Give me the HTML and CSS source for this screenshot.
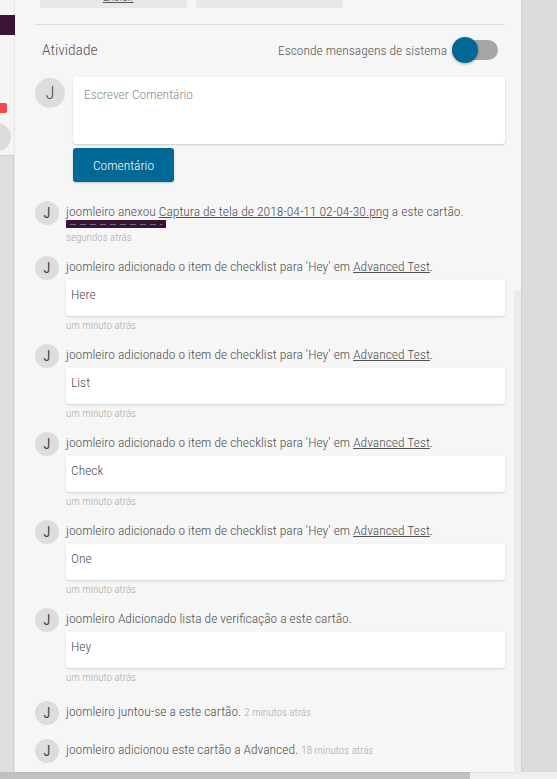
FILE: index.html
```html
<!DOCTYPE html>
<html lang="pt">
<head>
<meta charset="utf-8">
<title>Atividade</title>
<link rel="stylesheet" href="styles.css">
</head>
<body>
<div class="screen">
  <div class="board">
    <div class="strip">
      <div class="strip-thumb"></div>
      <div class="strip-badge"></div>
      <div class="strip-avatar"></div>
      <div class="strip-list"></div>
    </div>
    <div class="panel">
      <div class="tiles">
        <div class="tile"><span class="tile-text">✎ <u>Excluir</u></span></div>
        <div class="tile"></div>
      </div>
      <div class="rule"></div>
      <div class="activity-head">
        <h3 class="activity-title">Atividade</h3>
        <div class="toggle-wrap">
          <span class="toggle-label">Esconde mensagens de sistema</span>
          <span class="toggle"><span class="knob"></span></span>
        </div>
      </div>
      <div class="composer">
        <div class="avatar avatar-lg">J</div>
        <div class="composer-body">
          <div class="textarea">Escrever Comentário</div>
          <button class="btn">Comentário</button>
        </div>
      </div>
      <div class="feed">
        <div class="item">
          <div class="avatar">J</div>
          <div class="item-body">
            <div class="line">joomleiro anexou <a>Captura de tela de 2018-04-11 02-04-30.png</a> a este cartão.</div>
            <div class="thumb"><span class="thumb-dots"></span></div>
            <div class="time">segundos atrás</div>
          </div>
        </div>
        <div class="item">
          <div class="avatar">J</div>
          <div class="item-body">
            <div class="line">joomleiro adicionado o item de checklist para 'Hey' em <a>Advanced Test</a>.</div>
            <div class="card">Here</div>
            <div class="time">um minuto atrás</div>
          </div>
        </div>
        <div class="item">
          <div class="avatar">J</div>
          <div class="item-body">
            <div class="line">joomleiro adicionado o item de checklist para 'Hey' em <a>Advanced Test</a>.</div>
            <div class="card">List</div>
            <div class="time">um minuto atrás</div>
          </div>
        </div>
        <div class="item">
          <div class="avatar">J</div>
          <div class="item-body">
            <div class="line">joomleiro adicionado o item de checklist para 'Hey' em <a>Advanced Test</a>.</div>
            <div class="card">Check</div>
            <div class="time">um minuto atrás</div>
          </div>
        </div>
        <div class="item">
          <div class="avatar">J</div>
          <div class="item-body">
            <div class="line">joomleiro adicionado o item de checklist para 'Hey' em <a>Advanced Test</a>.</div>
            <div class="card">One</div>
            <div class="time">um minuto atrás</div>
          </div>
        </div>
        <div class="item item-wide">
          <div class="avatar">J</div>
          <div class="item-body">
            <div class="line">joomleiro Adicionado lista de verificação a este cartão.</div>
            <div class="card">Hey</div>
            <div class="time">um minuto atrás</div>
          </div>
        </div>
        <div class="item item-short">
          <div class="avatar">J</div>
          <div class="item-body">
            <div class="line">joomleiro juntou-se a este cartão. <span class="time-inline">2 minutos atrás</span></div>
          </div>
        </div>
        <div class="item item-short">
          <div class="avatar">J</div>
          <div class="item-body">
            <div class="line">joomleiro adicionou este cartão a Advanced. <span class="time-inline">18 minutos atrás</span></div>
          </div>
        </div>
      </div>
      <div class="vscroll"></div>
    </div>
    <div class="side"></div>
  </div>
  <div class="hscroll"><div class="hthumb"></div></div>
</div>
</body>
</html>
```
FILE: styles.css
```css
* { box-sizing: border-box; }
html, body { margin: 0; padding: 0; }
body {
  width: 557px;
  height: 779px;
  overflow: hidden;
  background: #f4f4f4;
  font-family: "Roboto Condensed", "Roboto", "Liberation Sans", sans-serif;
  font-weight: 300;
  color: #4f4f4f;
}
.screen { display: flex; flex-direction: column; height: 779px; }
.board { display: flex; flex: 0 0 772px; height: 772px; }

/* left strip (board behind) */
.strip { width: 15px; flex: 0 0 15px; display: flex; flex-direction: column; overflow: hidden; }
.strip-thumb { width: 15px; height: 20px; margin-top: 15px; background: #3a1432; }
.strip-badge { width: 7px; height: 10px; margin-top: 68px; background: #f04a4e; border-radius: 0 2px 2px 0; }
.strip-avatar { width: 28px; height: 28px; margin-top: 10px; margin-left: -17px; border-radius: 50%; background: #dcdcdc; }
.strip-list { flex: 1; margin-top: 4px; width: 14px; background: #dedede; border-top: 1px solid #cfcfcf; border-right: 1px solid #d0d0d0; }

/* main panel */
.panel {
  width: 506px;
  flex: 0 0 506px;
  background: #f6f6f6;
  padding: 0 16px 0 20px;
  position: relative;
  box-shadow: 0 0 2px rgba(0,0,0,0.15);
}
.side { flex: 1; background: #dcdcdc; }

.tiles { display: flex; gap: 9px; padding-left: 5px; }
.tile { width: 147px; height: 8px; background: #e8e8e8; border-radius: 0 0 3px 3px; overflow: hidden; }
.tile-text { display: block; margin-top: -10px; font-size: 12px; line-height: 14px; color: #555; padding-left: 50px; }

.rule { height: 1px; background: #dcdcdc; margin-top: 16px; }

.activity-head { display: flex; align-items: center; justify-content: space-between; height: 50px; padding-left: 7px; }
.activity-title { margin: 0; font-size: 15.5px; font-weight: 300; color: #555; }
.toggle-wrap { display: flex; align-items: center; gap: 5px; margin-right: 7px; }
.toggle-label { font-size: 13.5px; color: #555; }
.toggle { width: 46px; height: 20px; border-radius: 10px; background: #a6a6a6; position: relative; }
.knob { position: absolute; left: 0; top: -3px; width: 26px; height: 26px; border-radius: 50%; background: #006894; box-shadow: 0 1px 3px rgba(0,0,0,0.3); }

.avatar {
  width: 24px; height: 24px; flex: 0 0 24px;
  border-radius: 50%;
  background: #dddddd;
  color: #444;
  font-size: 14px;
  line-height: 24px;
  text-align: center;
  font-weight: 400;
}
.avatar-lg { width: 30px; height: 30px; flex: 0 0 30px; line-height: 30px; font-size: 18px; font-weight: 300; margin-top: 1px; }

.composer { display: flex; gap: 8px; margin-top: 2px; }
.composer-body { flex: 1; display: flex; flex-direction: column; align-items: flex-start; gap: 4px; }
.textarea {
  width: 100%; height: 67px;
  background: #fff;
  border-radius: 3px;
  box-shadow: 0 1px 2px rgba(0,0,0,0.18);
  padding: 9px 11px;
  font-size: 13.5px;
  color: #8a8a8a;
}
.btn {
  width: 101px; height: 34px;
  border: none;
  border-radius: 3px;
  background: #006894;
  color: #fff;
  font: inherit;
  font-size: 13.5px;
  box-shadow: 0 1px 2px rgba(0,0,0,0.2);
}

.feed { margin-top: 19px; }
.item { display: flex; gap: 7px; margin-bottom: 11px; }
.item-body { flex: 1; min-width: 0; }
.line { font-size: 13.5px; line-height: 20px; color: #4f4f4f; white-space: nowrap; }
.line a { color: #4f4f4f; text-decoration: underline; }
.thumb { width: 100px; height: 8px; margin-top: -1px; background: #3a1432; display: flex; align-items: center; padding: 0 4px; }
.thumb-dots { display: block; width: 92px; height: 1px; background: repeating-linear-gradient(90deg, #6a6a90 0 6px, transparent 6px 10px); }
.time { font-size: 11px; line-height: 14px; color: #a8a8a8; margin-top: 3px; }
.card {
  margin-top: 4px;
  height: 36px;
  background: #fff;
  border-radius: 3px;
  box-shadow: 0 1px 2px rgba(0,0,0,0.15);
  padding: 4px 5px;
  font-size: 13.5px;
  line-height: 20px;
  color: #4f4f4f;
}
.item-wide { margin-bottom: 16px; }
.item-short { margin-bottom: 14px; }
.time-inline { font-size: 11px; color: #a8a8a8; }

.vscroll { position: absolute; right: 0; top: 290px; bottom: 0; width: 7px; background: #ececec; border-radius: 4px 4px 0 0; }

.hscroll { flex: 0 0 7px; height: 7px; background: #f0f0f0; }
.hthumb { width: 470px; height: 7px; background: #c1c1c1; }
```
